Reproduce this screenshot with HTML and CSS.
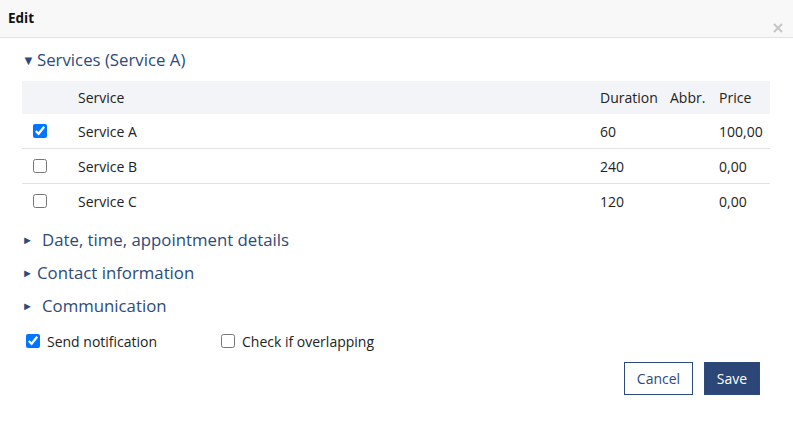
FILE: index.html
```html
<!DOCTYPE html>
<html lang="en">

<head>
  <meta charset="UTF-8">
  <meta name="viewport" content="width=device-width, initial-scale=1.0">
  <title>Edit</title>
  <link rel="stylesheet" href="styles.css">
</head>

<body>
  <div class="dialog">
    <div class="dialog-head">
      <span class="dialog-title">Edit</span>
      <span class="dialog-close">
        <svg width="10" height="10" viewBox="0 0 10 10"><path d="M1 1L9 9M9 1L1 9" stroke="#c6c6c6" stroke-width="2"/></svg>
      </span>
    </div>

    <div class="dialog-body">
      <div class="section-head section-open"><span class="arrow">&#9660;</span>Services (Service A)</div>

      <div class="svc-table">
        <div class="svc-row svc-header">
          <div></div>
          <div>Service</div>
          <div>Duration</div>
          <div>Abbr.</div>
          <div>Price</div>
        </div>
        <div class="svc-row">
          <div class="cell-check"><input type="checkbox" checked></div>
          <div>Service A</div>
          <div>60</div>
          <div></div>
          <div>100,00</div>
        </div>
        <div class="svc-row">
          <div class="cell-check"><input type="checkbox"></div>
          <div>Service B</div>
          <div>240</div>
          <div></div>
          <div>0,00</div>
        </div>
        <div class="svc-row">
          <div class="cell-check"><input type="checkbox"></div>
          <div>Service C</div>
          <div>120</div>
          <div></div>
          <div>0,00</div>
        </div>
      </div>

      <div class="section-head section-first"><span class="arrow arrow-small arrow-wide">&#9658;</span>Date, time, appointment details</div>
      <div class="section-head"><span class="arrow arrow-small">&#9658;</span>Contact information</div>
      <div class="section-head"><span class="arrow arrow-small arrow-wide">&#9658;</span>Communication</div>

      <div class="options">
        <label class="option option-first"><input type="checkbox" checked>Send notification</label>
        <label class="option"><input type="checkbox">Check if overlapping</label>
      </div>

      <div class="actions">
        <button class="btn btn-cancel">Cancel</button>
        <button class="btn btn-save">Save</button>
      </div>
    </div>
  </div>
</body>

</html>
```

FILE: styles.css
```css
* {
  margin: 0;
  padding: 0;
  box-sizing: border-box;
}

body {
  font-family: "Open Sans", "Liberation Sans", sans-serif;
  font-size: 14px;
  color: #222;
  background: #fff;
}

.dialog-head {
  display: flex;
  justify-content: space-between;
  height: 38px;
  padding: 0 10px 0 8px;
  background: #f8f8f8;
  border-bottom: 1px solid #e3e3e3;
}

.dialog-title {
  font-size: 13.5px;
  font-weight: 700;
  color: #111;
  line-height: 36px;
}

.dialog-close {
  padding-top: 23px;
}

.dialog-close svg {
  display: block;
}

.dialog-body {
  padding: 0 23px 0 22px;
}

.section-head {
  display: flex;
  align-items: center;
  height: 33px;
  font-size: 16.8px;
  color: #2c4a7c;
}

.section-open {
  margin-top: 5px;
}

.section-first {
  margin-top: 5px;
}

.arrow {
  font-size: 13px;
  width: 15px;
  color: #2c4a7c;
}

.arrow-small {
  font-size: 11px;
}

.arrow-wide {
  width: 20px;
}

.svc-table {
  margin-top: 5px;
}

.svc-row {
  display: grid;
  grid-template-columns: 56px 1fr 70px 49px 51px;
  align-items: center;
  height: 35px;
  border-top: 1px solid #e4e4e4;
}

.svc-header {
  height: 33px;
  background: #f3f4f7;
  border-top: none;
}

.svc-header + .svc-row {
  border-top: none;
  height: 34px;
}

.cell-check {
  padding-left: 11px;
  display: flex;
}

input[type="checkbox"] {
  width: 14px;
  height: 14px;
  margin: 0;
}

.options {
  display: flex;
  align-items: center;
  margin-top: 9px;
  height: 20px;
  padding-left: 4px;
}

.option {
  display: flex;
  align-items: center;
  gap: 7px;
}

.option-first {
  width: 195px;
}

.actions {
  display: flex;
  justify-content: flex-end;
  gap: 11px;
  margin-top: 11px;
  padding-right: 10px;
}

.btn {
  height: 33px;
  font-family: inherit;
  font-size: 14px;
  border: 1px solid #2c4a7c;
  cursor: pointer;
}

.btn-cancel {
  width: 69px;
  background: #fff;
  color: #2c4a7c;
}

.btn-save {
  width: 56px;
  background: #2b4677;
  color: #fff;
}
```
